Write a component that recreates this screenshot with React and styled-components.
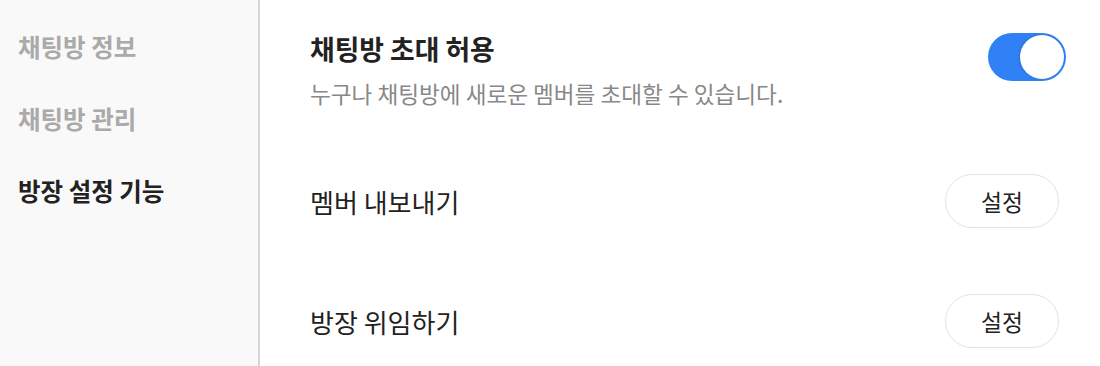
import styled, { createGlobalStyle } from "styled-components";

const GlobalStyle = createGlobalStyle`
    html, body {
        margin: 0;
        padding: 0;
        background: #FFFFFF;
    }
    body {
        font-family: "Noto Sans CJK KR", "Noto Sans", sans-serif;
    }
`

const menus = [
    { title: "채팅방 정보", active: false },
    { title: "채팅방 관리", active: false },
    { title: "방장 설정 기능", active: true },
];

const actions = ["멤버 내보내기", "방장 위임하기"];

function App() {
    return (
        <>
            <GlobalStyle />
            <Tela>
                <BarraLateral>
                    {menus.map((m, i) => (
                        <ItemMenu key={i} active={m.active}>{m.title}</ItemMenu>
                    ))}
                </BarraLateral>

                <Conteudo>
                    <LinhaConvite>
                        <Textos>
                            <Titulo>채팅방 초대 허용</Titulo>
                            <Descricao>누구나 채팅방에 새로운 멤버를 초대할 수 있습니다.</Descricao>
                        </Textos>
                        <Chave aria-checked="true" role="switch">
                            <Bolinha />
                        </Chave>
                    </LinhaConvite>

                    {actions.map((a, i) => (
                        <Linha key={i}>
                            <Rotulo>{a}</Rotulo>
                            <Botao>설정</Botao>
                        </Linha>
                    ))}
                </Conteudo>
            </Tela>
        </>
    );
}

const Tela = styled.div`
    width: 1100px;
    height: 366px;
    display: flex;
    overflow: hidden;
`

const BarraLateral = styled.nav`
    width: 260px;
    height: 100%;
    flex-shrink: 0;
    box-sizing: border-box;
    background: #F9F9F9;
    border-right: 2px solid #D6D6D6;
    padding: 10px 0 0 18px;
    display: flex;
    flex-direction: column;
`

const ItemMenu = styled.div`
    height: 72px;
    flex-shrink: 0;
    display: flex;
    align-items: center;
    font-size: 24.5px;
    font-weight: 700;
    color: ${p => p.active ? "#222222" : "#AAAAAA"};
`

const Conteudo = styled.main`
    flex: 1;
    padding: 32px 34px 0 50px;
    display: flex;
    flex-direction: column;
`

const LinhaConvite = styled.div`
    height: 109px;
    flex-shrink: 0;
    display: flex;
    justify-content: space-between;
    align-items: flex-start;
`

const Textos = styled.div`
    display: flex;
    flex-direction: column;
`

const Titulo = styled.h2`
    margin: 0;
    font-size: 26.8px;
    line-height: 34px;
    font-weight: 700;
    color: #222222;
`

const Descricao = styled.p`
    margin: 13px 0 0 0;
    font-size: 22.6px;
    line-height: 30px;
    font-weight: 400;
    color: #888888;
`

const Chave = styled.div`
    width: 78px;
    height: 48px;
    margin-top: 1px;
    border-radius: 24px;
    background: #3181F6;
    display: flex;
    align-items: center;
    justify-content: flex-end;
    padding: 2px;
    box-sizing: border-box;
`

const Bolinha = styled.div`
    width: 44px;
    height: 44px;
    border-radius: 50%;
    background: #FFFFFF;
    box-shadow: -1px 0 3px rgba(0, 0, 0, 0.15);
`

const Linha = styled.div`
    height: 120px;
    flex-shrink: 0;
    display: flex;
    justify-content: space-between;
    align-items: center;
    padding-right: 7px;
`

const Rotulo = styled.span`
    font-size: 26px;
    font-weight: 400;
    color: #222222;
`

const Botao = styled.button`
    width: 114px;
    height: 54px;
    border-radius: 27px;
    border: 1px solid #E2E2E2;
    background: #FFFFFF;
    font-family: "Noto Sans CJK KR", "Noto Sans", sans-serif;
    font-size: 22.8px;
    color: #222222;
    cursor: pointer;
`

export default App;
